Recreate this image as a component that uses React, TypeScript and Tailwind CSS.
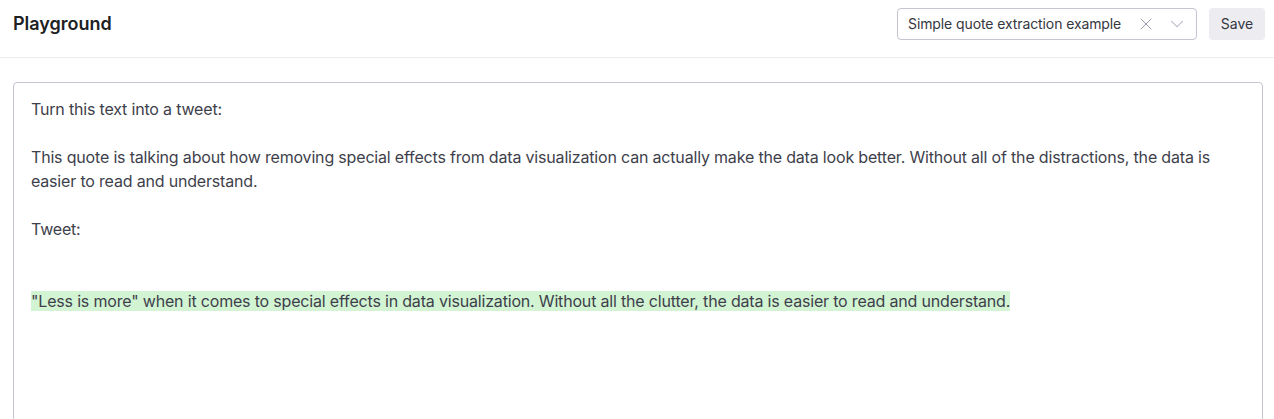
import { X, ChevronDown } from 'lucide-react';

const font = { fontFamily: 'Inter, "Noto Sans", sans-serif' };

export default function App() {
  return (
    <div className="w-[1274px] h-[419px] overflow-hidden bg-white text-[#353740]" style={font}>
      {/* Header */}
      <div className="h-[58px] flex items-center pl-[13px] border-b border-[#ececf1] overflow-hidden">
        <div className="flex-1 text-[18px] font-semibold text-[#202123] -mt-[11px]">Playground</div>
        <div className="flex items-center shrink-0 -mt-[10px] mr-[-40px]">
          <div className="w-[300px] h-[32px] flex items-center pl-[10px] pr-[8px] border border-[#c5c5d2] rounded-[4px] text-[14px] text-[#353740] tracking-[-0.1px]">
            <span className="flex-1">Simple quote extraction example</span>
            <X className="w-[20px] h-[20px] text-[#9a9aab] mr-[10px]" strokeWidth={1.2} />
            <ChevronDown className="w-[22px] h-[22px] text-[#acacbe]" strokeWidth={1.1} />
          </div>
          <button className="ml-[12px] w-[56px] h-[32px] rounded-[4px] bg-[#ececf1] text-[14px] text-[#353740]">
            Save
          </button>
          <div className="ml-[9px] w-[40px] h-[32px] border-l border-[#d9d9e3]" />
        </div>
      </div>

      {/* Editor */}
      <div className="pt-[24px] pl-[13px] pr-[11px]">
        <div className="h-[400px] border border-[#c5c5d2] rounded-[4px] pt-[14px] pl-[17px] pr-[20px] text-[16px] leading-[24px] tracking-[-0.18px] text-[#3e3f4b]">
          <p>Turn this text into a tweet:</p>
          <p className="h-[24px]" />
          <p>
            This quote is talking about how removing special effects from data visualization can actually make the data
            look better. Without all of the distractions, the data is easier to read and understand.
          </p>
          <p className="h-[24px]" />
          <p>Tweet:</p>
          <p className="h-[24px]" />
          <p className="h-[24px]" />
          <p>
            <span className="bg-[#d2f4d3]">
              "Less is more" when it comes to special effects in data visualization. Without all the clutter, the data is
              easier to read and understand.
            </span>
          </p>
        </div>
      </div>
    </div>
  );
}
